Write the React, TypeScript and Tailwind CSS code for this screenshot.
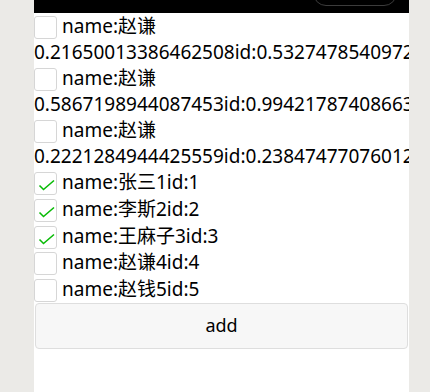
const items = [
  { name: "赵谦", id: "0.21650013386462508", idv: "0.5327478540972318", checked: false },
  { name: "赵谦", id: "0.5867198944087453", idv: "0.9942178740866341", checked: false },
  { name: "赵谦", id: "0.2221284944425559", idv: "0.2384747707601245", checked: false },
  { name: "张三1", idv: "1", checked: true },
  { name: "李斯2", idv: "2", checked: true },
  { name: "王麻子3", idv: "3", checked: true },
  { name: "赵谦4", idv: "4", checked: false },
  { name: "赵钱5", idv: "5", checked: false },
];

function Box({ checked }: { checked: boolean }) {
  return (
    <span className="mr-[5px] mt-[3px] inline-flex h-[23px] w-[23px] items-center justify-center rounded-[3px] border border-[#d6d6d6] bg-white align-top">
      {checked && (
        <svg width="23" height="23" viewBox="0 0 23 23" className="shrink-0">
          <path d="M5.5 13.5 L9.5 17.5 L20 8.5" fill="none" stroke="#09bb07" strokeWidth="1.6" />
        </svg>
      )}
    </span>
  );
}

export default function App() {
  return (
    <div className="flex h-[392px] w-[430px] bg-[#ebeae7] pl-[34px] font-['Noto_Sans','Noto_Sans_CJK_SC',sans-serif]">
      <div className="flex w-[375px] flex-col overflow-hidden bg-white text-[19px] text-black">
        <div className="relative h-[13px] shrink-0 bg-black">
          <div className="absolute right-[12px] top-[-20px] h-[26px] w-[84px] rounded-full border border-[#3c3c3c]" />
        </div>
        <div>
          {items.map((it, i) => (
            <label key={i} className={it.id ? "block leading-[26px]" : "block leading-[26.75px]"}>
              <Box checked={it.checked} />
              {`name:${it.name}${it.id ?? ""}id:${it.idv}`}
            </label>
          ))}
        </div>
        <button className="ml-[1px] mr-[1px] h-[46px] rounded-[4px] border border-[#dedede] bg-[#f7f7f7] text-[18px] text-black">
          add
        </button>
      </div>
    </div>
  );
}
